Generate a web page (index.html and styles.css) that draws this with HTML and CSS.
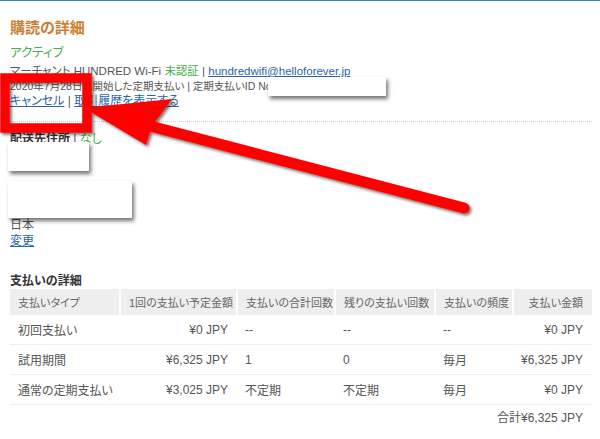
FILE: index.html
```html
<!DOCTYPE html>
<html lang="ja">
<head>
  <meta charset="UTF-8">
  <meta name="viewport" content="width=device-width, initial-scale=1.0">
  <title>購読の詳細</title>
  <link rel="stylesheet" href="styles.css">
</head>
<body>
  <div class="page">
    <section class="subscription">
      <h2 class="title">購読の詳細</h2>
      <div class="status">アクティブ</div>
      <div class="merchant">マーチャント HUNDRED Wi-Fi <span class="green">未認証</span> | <a href="#">hundredwifi@helloforever.jp</a></div>
      <div class="meta">2020年7月28日に開始した定期支払い | 定期支払いID No</div>
      <div class="actions"><a href="#">キャンセル</a> | <a href="#">取引履歴を表示する</a></div>
    </section>

    <section class="shipping">
      <div class="ship-head"><strong>配送先住所</strong> | <span class="green">なし</span></div>
      <div class="address"></div>
      <div class="line">日本</div>
      <div class="line"><a href="#">変更</a></div>
    </section>

    <section class="payment">
      <h3>支払いの詳細</h3>
      <table class="pay-table">
        <colgroup>
          <col style="width:110px">
          <col style="width:117px">
          <col style="width:98px">
          <col style="width:100px">
          <col style="width:78px">
          <col style="width:79px">
        </colgroup>
        <thead>
          <tr>
            <th>支払いタイプ</th>
            <th class="num">1回の支払い予定金額</th>
            <th>支払いの合計回数</th>
            <th>残りの支払い回数</th>
            <th>支払いの頻度</th>
            <th class="num">支払い金額</th>
          </tr>
        </thead>
        <tbody>
          <tr>
            <td>初回支払い</td>
            <td class="num">¥0 JPY</td>
            <td>--</td>
            <td>--</td>
            <td>--</td>
            <td class="num">¥0 JPY</td>
          </tr>
          <tr>
            <td>試用期間</td>
            <td class="num">¥6,325 JPY</td>
            <td>1</td>
            <td>0</td>
            <td>毎月</td>
            <td class="num">¥6,325 JPY</td>
          </tr>
          <tr>
            <td>通常の定期支払い</td>
            <td class="num">¥3,025 JPY</td>
            <td>不定期</td>
            <td>不定期</td>
            <td>毎月</td>
            <td class="num">¥0 JPY</td>
          </tr>
        </tbody>
      </table>
      <div class="total">合計¥6,325 JPY</div>
    </section>
  </div>

  <!-- redaction boxes and markup drawn over the page -->
  <div class="redact redact-id"></div>
  <div class="redact redact-name"></div>
  <div class="redact redact-street"></div>

  <svg class="markup" width="600" height="439" viewBox="0 0 600 439">
    <defs>
      <filter id="shadow" x="-20%" y="-20%" width="140%" height="140%">
        <feDropShadow dx="2" dy="2" stdDeviation="1.5" flood-color="#000" flood-opacity="0.55"/>
      </filter>
    </defs>
    <g filter="url(#shadow)">
      <rect x="5" y="78" width="82" height="50" fill="none" stroke="#ff0000" stroke-width="9.5"/>
      <line x1="150" y1="126" x2="464" y2="208" stroke="#ff0000" stroke-width="11" stroke-linecap="round"/>
      <polygon points="84,108 172,99 152,126 146,145" fill="#ff0000"/>
    </g>
  </svg>
</body>
</html>
```

FILE: styles.css
```css
body {
  margin: 0;
  border-top: 1px solid #3a7ec2;
  background: #fff;
  color: #555;
  font-family: "Liberation Sans", "Noto Sans CJK JP", sans-serif;
  font-feature-settings: "palt";
}
a {
  color: #2a64a8;
}
.page {
  padding: 0 8px 0 10px;
}
.green {
  color: #4cae4c;
}
.subscription {
  padding-bottom: 12px;
  border-bottom: 1px dotted #ccc;
}
.title {
  margin: 17px 0 0;
  font-size: 15px;
  line-height: 20px;
  color: #c97f36;
}
.status {
  margin-top: 6px;
  font-size: 12.5px;
  line-height: 18px;
  color: #4cae4c;
}
.merchant {
  margin-top: 1px;
  font-size: 11.5px;
  line-height: 16px;
}
.meta {
  font-size: 10.5px;
  line-height: 15px;
}
.actions {
  font-size: 12px;
  line-height: 15px;
}
.shipping {
  padding-top: 9px;
  font-size: 12px;
  line-height: 16px;
}
.ship-head strong {
  color: #333;
}
.address {
  height: 70px;
}
.payment {
  margin-top: 24px;
}
.payment h3 {
  margin: 0;
  font-size: 12px;
  line-height: 16px;
  color: #333;
}
.pay-table {
  width: 582px;
  table-layout: fixed;
  border-collapse: collapse;
  font-size: 12px;
}
.pay-table th {
  height: 26px;
  padding: 0 9px 0 8px;
  background: #eee;
  border-right: 2px solid #fff;
  color: #666;
  font-size: 11px;
  font-weight: normal;
  text-align: left;
  white-space: nowrap;
}
.pay-table th:last-child {
  border-right: none;
}
.pay-table td {
  height: 29px;
  padding: 0 9px 0 8px;
  border-bottom: 1px solid #eee;
  white-space: nowrap;
}
.pay-table .num {
  text-align: right;
}
.total {
  margin-top: 5px;
  padding-right: 9px;
  font-size: 12px;
  line-height: 16px;
  text-align: right;
}
.redact {
  position: absolute;
  background: #fff;
  box-shadow: 2px 3px 4px rgba(0, 0, 0, 0.55);
}
.redact-id {
  left: 268px;
  top: 77px;
  width: 118px;
  height: 19px;
}
.redact-name {
  left: 8px;
  top: 142px;
  width: 81px;
  height: 29px;
}
.redact-street {
  left: 8px;
  top: 181px;
  width: 124px;
  height: 37px;
}
.markup {
  position: absolute;
  top: 0;
  left: 0;
  pointer-events: none;
}
```
